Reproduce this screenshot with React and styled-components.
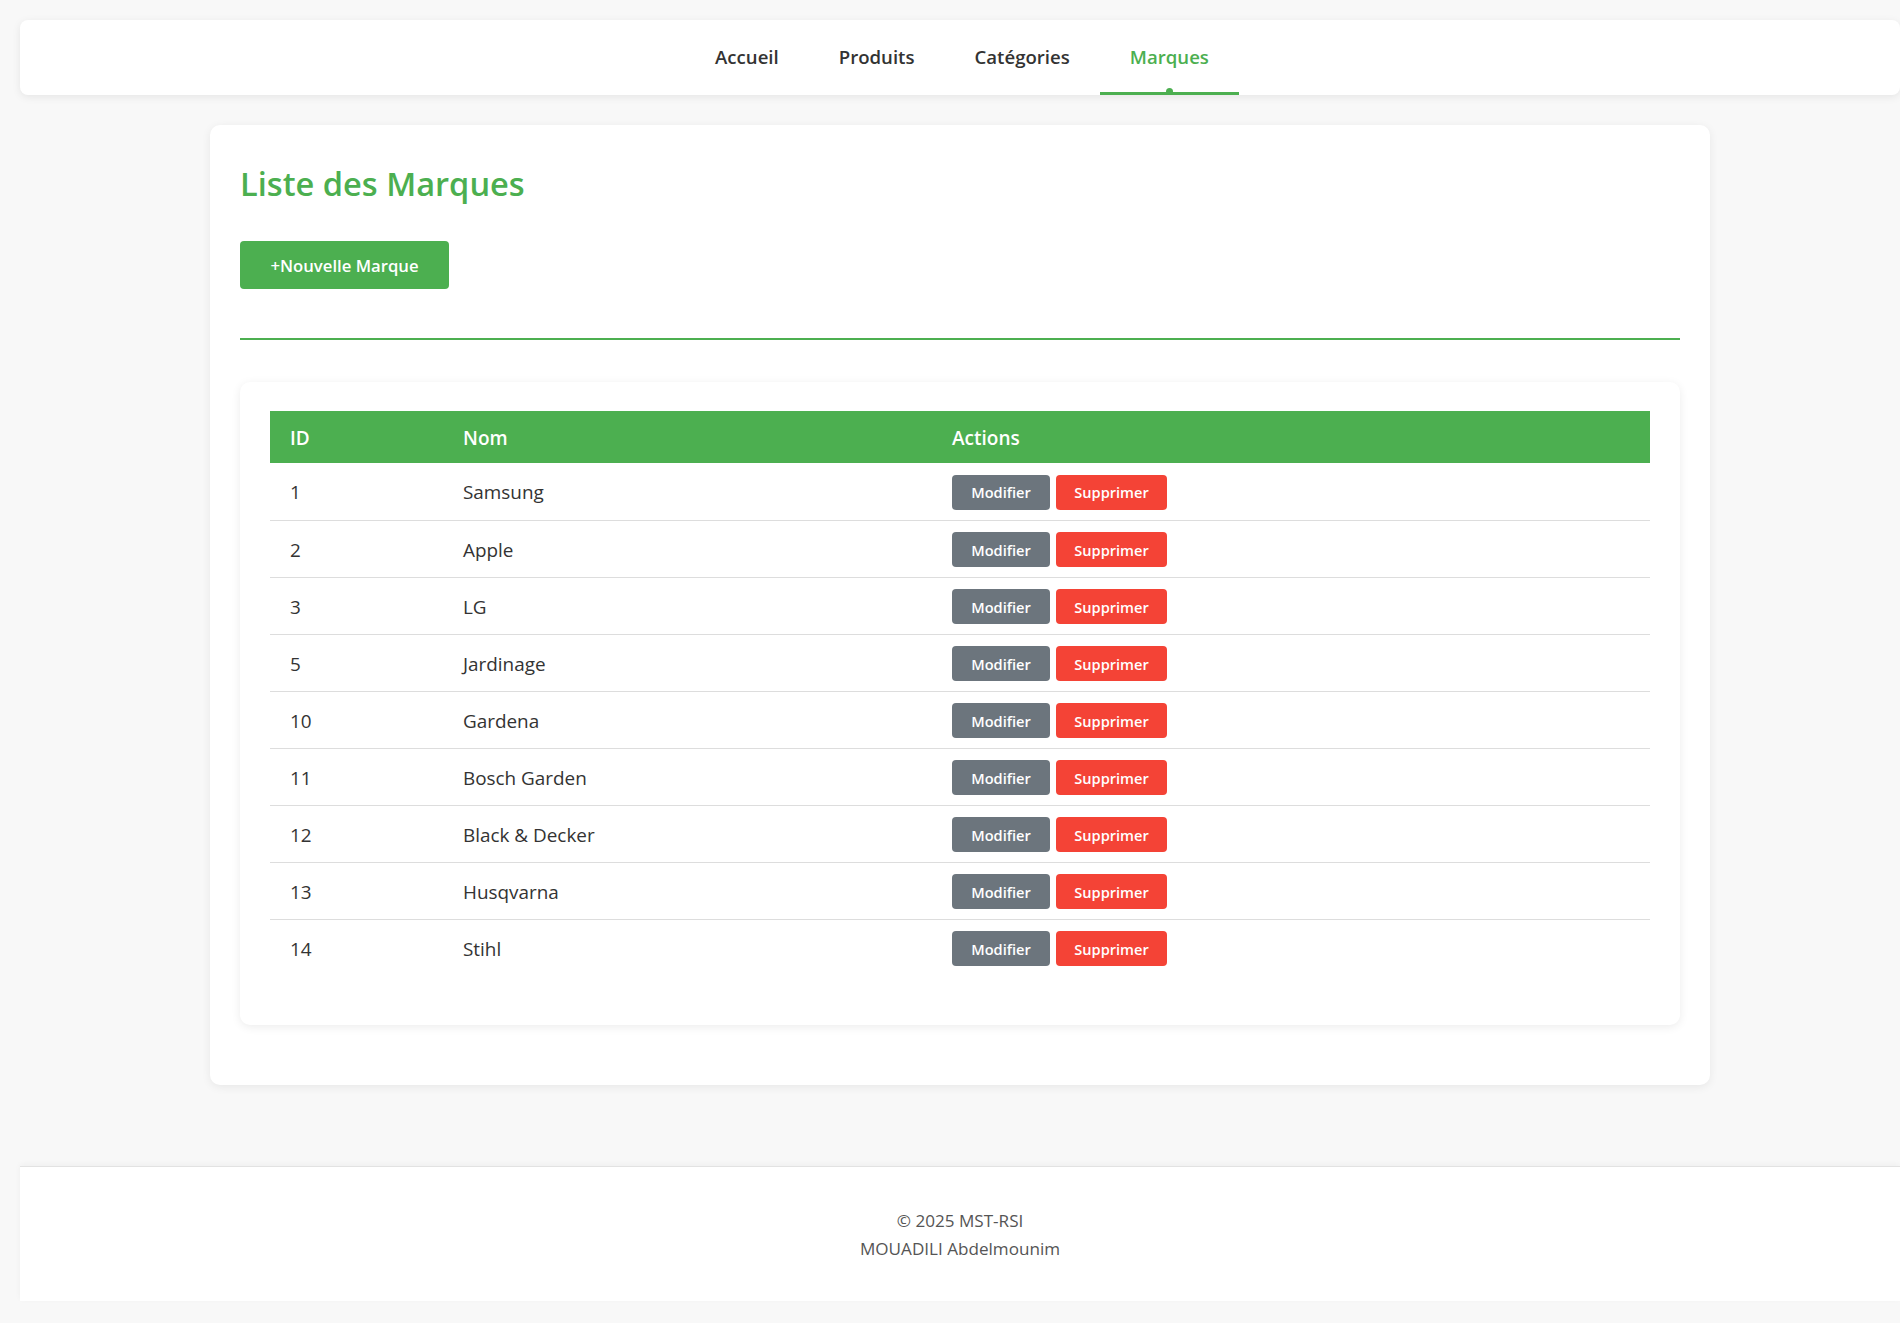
import React, { useState } from "react";
import styled, { createGlobalStyle } from "styled-components";

const marques = [
  { id: 1, nom: "Samsung" },
  { id: 2, nom: "Apple" },
  { id: 3, nom: "LG" },
  { id: 5, nom: "Jardinage" },
  { id: 10, nom: "Gardena" },
  { id: 11, nom: "Bosch Garden" },
  { id: 12, nom: "Black & Decker" },
  { id: 13, nom: "Husqvarna" },
  { id: 14, nom: "Stihl" },
];

const links = ["Accueil", "Produits", "Catégories", "Marques"];

const App = () => {
  const [active, setActive] = useState("Marques");

  return (
    <>
      <GlobalStyle />
      <Page>
        <Navbar>
          {links.map((link) => (
            <NavLink key={link} active={active === link} onClick={() => setActive(link)}>
              {link}
            </NavLink>
          ))}
        </Navbar>

        <Main>
          <Card>
            <Title>Liste des Marques</Title>
            <AddButton>+Nouvelle Marque</AddButton>
            <Divider />

            <TableCard>
              <Table>
                <thead>
                  <tr>
                    <Th width="173px">ID</Th>
                    <Th width="489px">Nom</Th>
                    <Th>Actions</Th>
                  </tr>
                </thead>
                <tbody>
                  {marques.map((m) => (
                    <Row key={m.id}>
                      <Td>{m.id}</Td>
                      <Td>{m.nom}</Td>
                      <Td>
                        <Actions>
                          <ActionButton variant="edit">Modifier</ActionButton>
                          <ActionButton variant="delete">Supprimer</ActionButton>
                        </Actions>
                      </Td>
                    </Row>
                  ))}
                </tbody>
              </Table>
            </TableCard>
          </Card>
        </Main>

        <Footer>
          <p>© 2025 MST-RSI</p>
          <p>MOUADILI Abdelmounim</p>
        </Footer>
      </Page>
    </>
  );
};

export default App;

// Styled Components
const GlobalStyle = createGlobalStyle`
  body {
    margin: 0;
    background: #f8f8f8;
    font-family: 'Open Sans', 'Noto Sans', sans-serif;
    color: #333;
    overflow-x: hidden;
  }
  * {
    box-sizing: border-box;
  }
`;

const Page = styled.div`
  width: 1900px;
  padding: 20px 0 21px 20px;
`;

const Navbar = styled.nav`
  display: flex;
  justify-content: center;
  height: 75px;
  padding-left: 4px;
  background: #fff;
  border-radius: 8px;
  box-shadow: 0 2px 8px rgba(0, 0, 0, 0.08);
`;

const NavLink = styled.a`
  position: relative;
  display: flex;
  align-items: center;
  padding: 0 30px 3px;
  font-size: 18.6px;
  font-weight: 600;
  color: ${(props) => (props.active ? "#4caf50" : "#333")};
  cursor: pointer;

  &::after {
    content: "";
    display: ${(props) => (props.active ? "block" : "none")};
    position: absolute;
    left: 0;
    right: 0;
    bottom: 0;
    height: 3px;
    background: #4caf50;
  }

  &::before {
    content: "";
    display: ${(props) => (props.active ? "block" : "none")};
    position: absolute;
    left: 50%;
    bottom: 0;
    width: 7px;
    height: 7px;
    margin-left: -3px;
    border-radius: 50%;
    background: #4caf50;
  }
`;

const Main = styled.main`
  padding: 30px 0 81px;
`;

const Card = styled.section`
  max-width: 1500px;
  margin: 0 auto;
  background: #fff;
  border-radius: 10px;
  box-shadow: 0 2px 10px rgba(0, 0, 0, 0.07);
  padding: 30px 30px 60px;
`;

const Title = styled.h1`
  margin: 3px 0 0;
  font-size: 32.6px;
  line-height: 52px;
  font-weight: 600;
  color: #4caf50;
`;

const AddButton = styled.button`
  display: block;
  margin-top: 31px;
  width: 209px;
  height: 48px;
  background: #4caf50;
  color: #fff;
  border: none;
  border-radius: 4px;
  font-family: inherit;
  font-size: 16.7px;
  font-weight: 600;
  cursor: pointer;
`;

const Divider = styled.div`
  margin-top: 49px;
  height: 2px;
  background: #4caf50;
`;

const TableCard = styled.div`
  margin-top: 42px;
  background: #fff;
  border-radius: 10px;
  box-shadow: 0 2px 10px rgba(0, 0, 0, 0.08);
  padding: 29px 30px 49px;
`;

const Table = styled.table`
  width: 100%;
  border-collapse: collapse;
`;

const Th = styled.th`
  width: ${(props) => props.width || "auto"};
  height: 52px;
  padding: 1px 20px 0;
  background: #4caf50;
  color: #fff;
  text-align: left;
  font-size: 19px;
  font-weight: 600;
`;

const Row = styled.tr`
  border-bottom: 1px solid #ddd;

  &:last-child {
    border-bottom: none;
  }
`;

const Td = styled.td`
  height: 57px;
  padding: 2px 20px 0;
  font-size: 18.9px;
  color: #333;
`;

const Actions = styled.div`
  display: flex;
  gap: 6px;
`;

const ActionButton = styled.button`
  height: 35px;
  padding: 0 16px;
  min-width: ${(props) => (props.variant === "edit" ? "98px" : "111px")};
  border: none;
  border-radius: 4px;
  background: ${(props) => (props.variant === "edit" ? "#6c757d" : "#f44336")};
  color: #fff;
  font-family: inherit;
  font-size: 14.6px;
  font-weight: 600;
  cursor: pointer;
`;

const Footer = styled.footer`
  background: #fff;
  border-top: 1px solid #e2e2e2;
  box-shadow: 0 -2px 6px rgba(0, 0, 0, 0.04);
  height: 135px;
  padding-top: 2px;
  display: flex;
  flex-direction: column;
  justify-content: center;
  align-items: center;
  color: #555;
  font-size: 17.1px;

  p {
    margin: 0;
    line-height: 28px;
  }
`;
